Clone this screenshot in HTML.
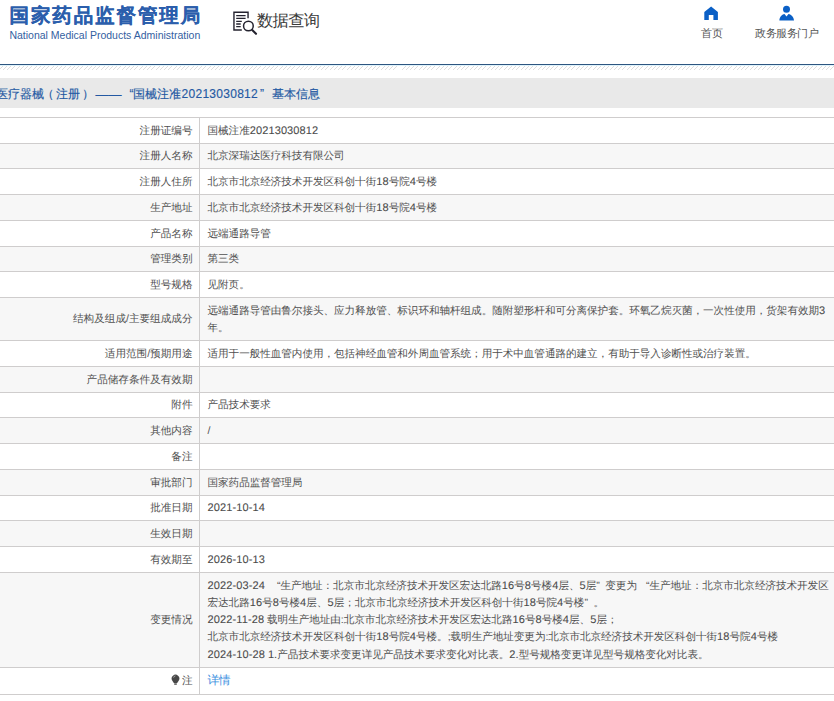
<!DOCTYPE html>
<html><head><meta charset="utf-8"><style>
html,body{margin:0;padding:0;background:#fff;}
body{width:834px;height:701px;overflow:hidden;position:relative;font-family:"Liberation Sans",sans-serif;color:#555;}
.abs{position:absolute;}
.logo{position:absolute;left:9.5px;top:3.7px;font-size:19.5px;font-weight:bold;color:#2b5eac;white-space:nowrap;line-height:24px;letter-spacing:1.9px;-webkit-text-stroke:0.15px #2b5eac;text-rendering:geometricPrecision;}
.logo-en{position:absolute;left:9.4px;top:29.4px;font-size:10.5px;color:#33609f;white-space:nowrap;line-height:12px;}
.sj{position:absolute;left:257px;top:11.3px;font-size:16.3px;color:#3a3a3a;line-height:20px;white-space:nowrap;letter-spacing:-0.7px;text-rendering:geometricPrecision;}
.nav{position:absolute;font-size:11px;color:#555;line-height:12px;white-space:nowrap;}
.hline{position:absolute;left:0;top:63.6px;width:834px;height:1.4px;background:#2d5580;}
.hatch{position:absolute;left:0;top:66px;width:834px;height:3.5px;background:repeating-linear-gradient(-45deg,#fff 0,#fff 2.3px,#dedede 2.3px,#dedede 3px);}
.cyan{position:absolute;left:0;top:65px;width:834px;height:1px;background:#dff3fb;}
.band{position:absolute;left:0;top:78px;width:834px;height:30px;background:#e9e9e9;}
.title{position:absolute;left:-1px;top:85.7px;font-size:12px;line-height:17px;color:#2459a3;-webkit-text-stroke:0.15px #2459a3;white-space:nowrap;}
.row{text-rendering:geometricPrecision;color:#505050;position:absolute;left:0;width:834px;border-top:1px solid #cfcdcd;box-sizing:border-box;}
.row:last-child{border-bottom:1px solid #cfcdcd;}
.lab{position:absolute;left:0;top:0;bottom:0;width:200px;border-right:1px solid #cfcdcd;box-sizing:border-box;display:flex;align-items:center;justify-content:flex-end;padding-right:6.5px;font-size:10.6px;line-height:17.2px;white-space:nowrap;}
.val{letter-spacing:-0.05px;position:absolute;left:207.5px;top:0;bottom:0;right:0;display:flex;align-items:center;font-size:10.6px;line-height:17.2px;white-space:nowrap;}
.d{font-size:11px;letter-spacing:0.12px;-webkit-text-stroke:0.08px #4a4a4a;color:#4a4a4a;}
.lab>div,.val>div{position:relative;top:0.8px;}
.ql{display:inline-block;width:12.5px;text-align:right;}
.qr{display:inline-block;width:9px;text-align:left;}
.link{color:#3b8fe0;font-size:11.8px;position:relative;top:-0.3px;letter-spacing:-0.6px}
.bulb{display:inline-block;width:8px;height:10px;margin-right:1px;}
</style></head><body>
<div class="logo">国家药品监督管理局</div>
<div class="logo-en">National Medical Products Administration</div>
<svg class="abs" style="left:0;top:0" width="260" height="40" viewBox="0 0 260 40"><g fill="none" stroke="#24232f"><path d="M241.8 30.05 H233.95 V12.25 H248.05 V18.3" stroke-width="1.4"/><path d="M236.2 15.6 H245.6 M236.2 18.3 H245.6 M236.2 21.3 H241.8 M236.2 24 H240.7 M236.2 26.7 H240.7" stroke-width="1.3"/><circle cx="248.4" cy="26" r="4.85" stroke-width="1.5"/><path d="M252.2 30 L256 33.8" stroke-width="2.1" stroke-linecap="round"/></g></svg>
<div class="sj">数据查询</div>
<svg class="abs" style="left:0;top:0" width="834" height="24" viewBox="0 0 834 24"><path d="M704.3 12 L711.1 6.6 L717.9 12 V19.9 H713.4 V14.9 H708.8 V19.9 H704.3 Z" fill="#0b60c6"/><circle cx="786.5" cy="9.35" r="3.5" fill="#0b60c6"/><path d="M779.4 20.6 C779.4 17.2 781.6 14.3 784.5 13.9 L786.5 16.4 L788.5 13.9 C791.4 14.3 794 17.2 794 20.6 Z" fill="#0b60c6"/></svg>
<div class="nav" style="left:700.5px;top:27px">首页</div>

<div class="nav" style="left:755px;top:27px;letter-spacing:-0.45px">政务服务门户</div>
<div class="hline"></div><div class="cyan"></div><div class="hatch"></div>
<div class="band"></div>
<svg class="abs" style="left:160px;top:665px;z-index:5" width="30" height="30" viewBox="160 665 30 30"><path d="M172.2 680.6 A3.85 3.85 0 1 1 178.8 680.6 L177.2 682.9 H173.8 Z" fill="#474747"/><rect x="174.2" y="683.3" width="2.6" height="1.5" fill="#555"/><path d="M173.6 677.6 A2.2 2.2 0 0 1 175.4 675.9" stroke="#bbb" stroke-width="0.8" fill="none"/></svg>
<div class="title" style="left:-4px">医疗器械</div><div class="title" style="left:41.5px">（</div><div class="title" style="left:55.5px">注册</div><div class="title" style="left:81.5px">）</div><div class="title" style="left:95.5px;font-size:13px">——</div><div class="title" style="left:129.5px">“</div><div class="title" style="left:132.5px;letter-spacing:0.27px">国械注准20213030812</div><div class="title" style="left:260px">”</div><div class="title" style="left:271.5px">基本信息</div>
<div class="row" style="top:117.00px;height:26.00px;background:#fff"><div class="lab"><div>注册证编号</div></div><div class="val"><div>国械注准<span class="d">20213030812</span></div></div></div>
<div class="row" style="top:143.00px;height:25.00px;background:#f7f7f7"><div class="lab"><div>注册人名称</div></div><div class="val"><div>北京深瑞达医疗科技有限公司</div></div></div>
<div class="row" style="top:168.00px;height:26.00px;background:#fff"><div class="lab"><div>注册人住所</div></div><div class="val"><div>北京市北京经济技术开发区科创十街<span class="d">18</span>号院<span class="d">4</span>号楼</div></div></div>
<div class="row" style="top:194.00px;height:26.00px;background:#f7f7f7"><div class="lab"><div>生产地址</div></div><div class="val"><div>北京市北京经济技术开发区科创十街<span class="d">18</span>号院<span class="d">4</span>号楼</div></div></div>
<div class="row" style="top:220.00px;height:26.00px;background:#fff"><div class="lab"><div>产品名称</div></div><div class="val"><div>远端通路导管</div></div></div>
<div class="row" style="top:246.00px;height:25.00px;background:#f7f7f7"><div class="lab"><div>管理类别</div></div><div class="val"><div>第三类</div></div></div>
<div class="row" style="top:271.00px;height:26.00px;background:#fff"><div class="lab"><div>型号规格</div></div><div class="val"><div>见附页。</div></div></div>
<div class="row" style="top:297.00px;height:43.00px;background:#f7f7f7"><div class="lab"><div>结构及组成/主要组成成分</div></div><div class="val"><div>远端通路导管由鲁尔接头、应力释放管、标识环和轴杆组成。随附塑形杆和可分离保护套。环氧乙烷灭菌，一次性使用，货架有效期<span class="d">3</span><br>年。</div></div></div>
<div class="row" style="top:340.00px;height:26.00px;background:#fff"><div class="lab"><div>适用范围/预期用途</div></div><div class="val"><div>适用于一般性血管内使用，包括神经血管和外周血管系统；用于术中血管通路的建立，有助于导入诊断性或治疗装置。</div></div></div>
<div class="row" style="top:366.00px;height:26.00px;background:#f7f7f7"><div class="lab"><div>产品储存条件及有效期</div></div><div class="val"><div></div></div></div>
<div class="row" style="top:392.00px;height:25.00px;background:#fff"><div class="lab"><div>附件</div></div><div class="val"><div>产品技术要求</div></div></div>
<div class="row" style="top:417.00px;height:26.00px;background:#f7f7f7"><div class="lab"><div>其他内容</div></div><div class="val"><div>/</div></div></div>
<div class="row" style="top:443.00px;height:26.00px;background:#fff"><div class="lab"><div>备注</div></div><div class="val"><div></div></div></div>
<div class="row" style="top:469.00px;height:26.00px;background:#f7f7f7"><div class="lab"><div>审批部门</div></div><div class="val"><div>国家药品监督管理局</div></div></div>
<div class="row" style="top:495.00px;height:25.00px;background:#fff"><div class="lab"><div>批准日期</div></div><div class="val"><div><span class="d">2021-10-14</span></div></div></div>
<div class="row" style="top:520.00px;height:26.00px;background:#f7f7f7"><div class="lab"><div>生效日期</div></div><div class="val"><div></div></div></div>
<div class="row" style="top:546.00px;height:26.00px;background:#fff"><div class="lab"><div>有效期至</div></div><div class="val"><div><span class="d">2026-10-13</span></div></div></div>
<div class="row" style="top:572.00px;height:95.00px;background:#f7f7f7"><div class="lab"><div>变更情况</div></div><div class="val"><div><span class="d">2022-03-24</span> <span class="ql">“</span>生产地址：北京市北京经济技术开发区宏达北路<span class="d">16</span>号<span class="d">8</span>号楼<span class="d">4</span>层、<span class="d">5</span>层<span class="qr">”</span>变更为<span class="ql">“</span>生产地址：北京市北京经济技术开发区<br>宏达北路<span class="d">16</span>号<span class="d">8</span>号楼<span class="d">4</span>层、<span class="d">5</span>层；北京市北京经济技术开发区科创十街<span class="d">18</span>号院<span class="d">4</span>号楼<span class="qr">”</span>。<br><span class="d">2022-11-28</span> 载明生产地址由:北京市北京经济技术开发区宏达北路<span class="d">16</span>号<span class="d">8</span>号楼<span class="d">4</span>层、<span class="d">5</span>层；<br>北京市北京经济技术开发区科创十街<span class="d">18</span>号院<span class="d">4</span>号楼。;载明生产地址变更为:北京市北京经济技术开发区科创十街<span class="d">18</span>号院<span class="d">4</span>号楼<br><span class="d">2024-10-28</span> <span class="d">1.</span>产品技术要求变更详见产品技术要求变化对比表。<span class="d">2.</span>型号规格变更详见型号规格变化对比表。</div></div></div>
<div class="row" style="top:667.00px;height:28.00px;background:#fff"><div class="lab"><div>注</div></div><div class="val"><div><span class="link">详情</span></div></div></div>
</body></html>
